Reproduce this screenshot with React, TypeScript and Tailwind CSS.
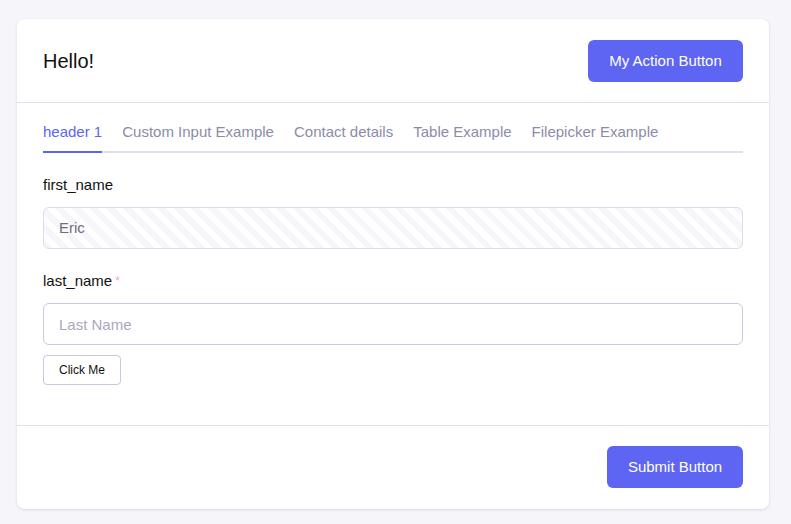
const TABS = ["header 1", "Custom Input Example", "Contact details", "Table Example", "Filepicker Example"];

export default function App() {
  return (
    <div className="min-h-screen bg-[#f5f5fa] pt-[19px] px-[17px] font-['Liberation_Sans',Arial,sans-serif]">
      <div className="w-[752px] bg-white rounded-lg shadow-[0_1px_3px_rgba(60,60,100,0.15)]">
        <div className="flex items-center justify-between px-[26px] pt-[21px] pb-5 border-b border-[#e0def0]">
          <h1 className="text-[20px] text-[#111]">Hello!</h1>
          <button className="h-[42px] w-[155px] rounded-md bg-[#5e65f2] text-white text-[15px]">
            My Action Button
          </button>
        </div>

        <div className="px-[26px] pt-5 pb-10">
          <div className="flex gap-5 border-b-2 border-[#dfe0ee]">
            {TABS.map((t, i) => (
              <div
                key={t}
                className={
                  i === 0
                    ? "-mb-[2px] pb-[10px] leading-[18px] text-[15px] text-[#5e65f2] border-b-2 border-[#5e65f2]"
                    : "-mb-[2px] pb-[10px] leading-[18px] text-[15px] text-[#8c8ca8] border-b-2 border-transparent"
                }
              >
                {t}
              </div>
            ))}
          </div>

          <div className="mt-[22px] text-[15px] text-[#111] leading-[20px]">first_name</div>
          <div className="mt-[12px] h-[42px] rounded-md border border-[#dcdcea] flex items-center px-[15px] text-[15px] text-[#6e6e80] bg-[repeating-linear-gradient(45deg,#f6f6fa_0px,#f6f6fa_6px,#ffffff_6px,#ffffff_12px)]">
            Eric
          </div>

          <div className="mt-[22px] text-[15px] text-[#111] leading-[20px]">
            last_name<span className="ml-[3px] text-[#f9a3c2] text-[12px] align-top">*</span>
          </div>
          <input
            placeholder="Last Name"
            className="mt-[12px] w-full h-[42px] rounded-md border border-[#c9c8dd] px-[15px] text-[15px] placeholder:text-[#a9a9bd] outline-none"
          />
          <button className="mt-[10px] h-[30px] w-[78px] rounded border border-[#c9c8dd] text-[12px] text-[#111] bg-white">
            Click Me
          </button>
        </div>

        <div className="flex justify-end px-[26px] pt-5 pb-[21px] border-t border-[#e0def0]">
          <button className="h-[42px] w-[136px] rounded-md bg-[#5e65f2] text-white text-[15px]">
            Submit Button
          </button>
        </div>
      </div>
    </div>
  );
}
